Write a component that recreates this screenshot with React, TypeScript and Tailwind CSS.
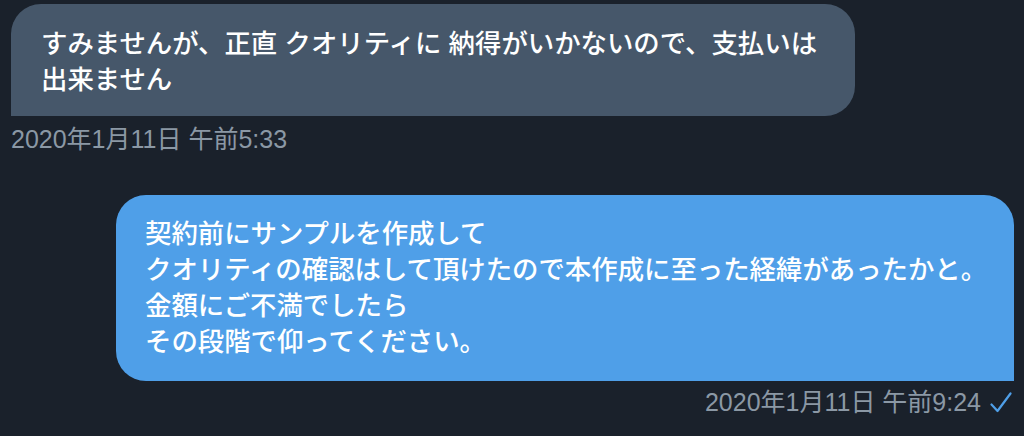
export default function App() {
  const font = "font-['Liberation_Sans','Noto_Sans_CJK_JP',sans-serif]";

  return (
    <div className={`${font} flex h-[436px] w-full flex-col overflow-hidden bg-[#1a212b] px-[10px] pt-[4px]`}>
      {/* 受信メッセージ */}
      <div className="ml-[1px] w-[844px] self-start whitespace-nowrap rounded-[30px] rounded-bl-none bg-[#46576a] pb-[18px] pl-[30px] pr-[30px] pt-[22px] text-[26.4px] font-medium leading-[36px] text-white">
        すみませんが、正直 クオリティに 納得がいかないので、支払いは
        <br />
        出来ません
      </div>
      <div className="ml-[1px] mt-[9px] text-[25px] leading-[28px] text-[#8b98a5]">
        2020年1月11日 午前5:33
      </div>

      {/* 送信メッセージ */}
      <div className="mt-[42px] w-[898px] self-end whitespace-nowrap rounded-[30px] rounded-br-none bg-[#4f9fe8] pb-[21px] pl-[29px] pr-[20px] pt-[21px] text-[26.4px] font-medium leading-[36px] text-white">
        契約前にサンプルを作成して
        <br />
        クオリティの確認はして頂けたので本作成に至った経緯があったかと。
        <br />
        金額にご不満でしたら
        <br />
        その段階で仰ってください。
      </div>
      <div className="mt-[7px] flex items-center justify-end gap-[9px] text-[25px] leading-[28px] text-[#8b98a5]">
        <span>2020年1月11日 午前9:24</span>
        <svg width="22" height="21" viewBox="0 0 22 21" fill="none" className="mr-[2px]">
          <path d="M1.5 12.5 L7.5 19 L20.5 1.5" stroke="#4f9fe8" strokeWidth="2.2" strokeLinecap="round" strokeLinejoin="round" />
        </svg>
      </div>
    </div>
  );
}
